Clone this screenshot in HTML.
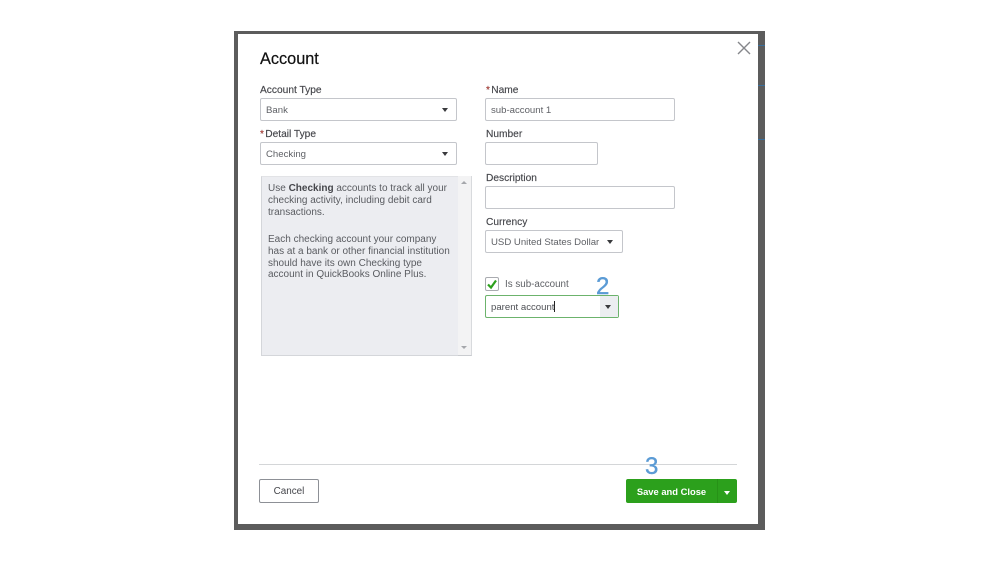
<!DOCTYPE html>
<html><head><meta charset="utf-8"><style>
html,body{margin:0;padding:0;background:#fff;width:999px;height:562px;overflow:hidden}
body{font-family:"Liberation Sans",sans-serif;position:relative}
.a{position:absolute}
.l{position:absolute;font-size:10.2px;line-height:14px;color:#45464b;white-space:nowrap;-webkit-text-stroke:.15px #45464b}
.i{position:absolute;box-sizing:border-box;background:#fff;border:1px solid #c4c6cb;border-radius:2px;font-size:9.6px;line-height:23px;color:#5f6166;padding-left:5px;white-space:nowrap}
.c{position:absolute;width:0;height:0;border-left:3.5px solid transparent;border-right:3.5px solid transparent;border-top:4px solid #393a3d}
.s{color:#d52b1e;font-size:10px;margin-right:-1.5px}
.h{position:absolute;height:1px}
</style></head><body>
<div class="a" style="left:234px;top:31px;width:531px;height:499px;background:#5c5c5c"></div>
<div class="h" style="left:758px;top:45px;width:7px;background:#3a6f9c"></div>
<div class="h" style="left:758px;top:85px;width:7px;background:#3a6f9c"></div>
<div class="h" style="left:758px;top:139px;width:7px;background:#3a6f9c"></div>
<div class="a" style="left:238px;top:34px;width:520px;height:490px;background:#fff"></div>

<div class="a" style="left:260px;top:49px;font-size:16.3px;line-height:20px;color:#111;-webkit-text-stroke:.2px #111">Account</div>
<svg class="a" style="left:737px;top:41px" width="14" height="14" viewBox="0 0 14 14"><path d="M1 1L13 13M13 1L1 13" stroke="#85878b" stroke-width="1.4" fill="none"/></svg>

<div class="l" style="left:260px;top:84px">Account Type</div>
<div class="i" style="left:260px;top:98px;width:197px;height:23px">Bank</div>
<div class="c" style="left:442px;top:108px"></div>
<div class="l" style="left:260px;top:128px"><span class="s">*</span> Detail Type</div>
<div class="i" style="left:260px;top:142px;width:197px;height:23px">Checking</div>
<div class="c" style="left:442px;top:152px"></div>

<div class="a" style="left:261px;top:176px;width:211px;height:180px;background:#f3f3f4;box-sizing:border-box;border-bottom:1px solid #c9cbcf;border-right:1px solid #d8dadd"></div>
<div class="a" style="left:261px;top:176px;width:197px;height:180px;background:#ecedf1;box-sizing:border-box;border:1px solid #d4d6da;border-right:0;border-top-color:#e2e3e6"></div>
<div class="a" style="left:268px;top:183px;width:190px;font-size:10px;line-height:12px;color:#5a5c61;white-space:nowrap">Use <b style="color:#45464b">Checking</b> accounts to track all your<br>checking activity, including debit card<br>transactions.<div style="height:15px"></div>Each checking account your company<br>has at a bank or other financial institution<br>should have its own Checking type<br><span style="position:relative;top:-1px">account in QuickBooks Online Plus.</span></div>
<div class="a" style="left:461px;top:181px;border-left:3px solid transparent;border-right:3px solid transparent;border-bottom:3px solid #a5a7ab"></div>
<div class="a" style="left:461px;top:346px;border-left:3px solid transparent;border-right:3px solid transparent;border-top:3px solid #a5a7ab"></div>

<div class="l" style="left:486px;top:84px"><span class="s">*</span> Name</div>
<div class="i" style="left:485px;top:98px;width:190px;height:23px">sub-account 1</div>
<div class="l" style="left:486px;top:128px">Number</div>
<div class="i" style="left:485px;top:142px;width:113px;height:23px"></div>
<div class="l" style="left:486px;top:172px">Description</div>
<div class="i" style="left:485px;top:186px;width:190px;height:23px"></div>
<div class="l" style="left:486px;top:216px">Currency</div>
<div class="i" style="left:485px;top:230px;width:138px;height:23px">USD United States Dollar</div>
<div class="c" style="left:607px;top:240px"></div>

<div class="a" style="left:485px;top:277px;width:14px;height:14px;box-sizing:border-box;border:1px solid #a9abb0;border-radius:2px;background:#fff"></div>
<svg class="a" style="left:485px;top:277px" width="14" height="14" viewBox="0 0 14 14"><path d="M3 7.5L6 10.5L11 3.5" stroke="#2ca01c" stroke-width="2.2" fill="none"/></svg>
<div class="a" style="left:505px;top:278px;font-size:9.8px;line-height:13px;color:#5f6166">Is sub-account</div>

<div class="i" style="left:485px;top:295px;width:134px;height:23px;border-color:#6cb36c;color:#4f5156">parent account<span style="display:inline-block;width:1px;height:11px;background:#222;vertical-align:-2px"></span></div>
<div class="a" style="left:600px;top:296px;width:18px;height:21px;background:#eceef1"></div>
<div class="c" style="left:605px;top:305px"></div>
<div class="a" style="left:596px;top:273px;font-size:24px;line-height:28px;color:#5b9bd5;-webkit-text-stroke:.4px #5b9bd5">2</div>

<div class="a" style="left:259px;top:464px;width:478px;height:1px;background:#d4d6d8"></div>
<div class="a" style="left:645px;top:453px;font-size:24px;line-height:28px;color:#5b9bd5;-webkit-text-stroke:.4px #5b9bd5">3</div>

<div class="a" style="left:259px;top:479px;width:60px;height:24px;box-sizing:border-box;border:1px solid #8d9096;border-radius:2px;background:#fff;text-align:center;font-size:9.9px;line-height:24px;color:#45464b">Cancel</div>

<div class="a" style="left:626px;top:479px;width:111px;height:24px;background:#2ca01c;border-radius:2px"></div>
<div class="a" style="left:717px;top:479px;width:1px;height:24px;background:#279217"></div>
<div class="a" style="left:626px;top:480px;width:91px;text-align:center;font-size:9.4px;font-weight:bold;line-height:24px;color:#fff;white-space:nowrap">Save and Close</div>
<div class="c" style="left:724px;top:491px;border-top-color:#fff"></div>
</body></html>
